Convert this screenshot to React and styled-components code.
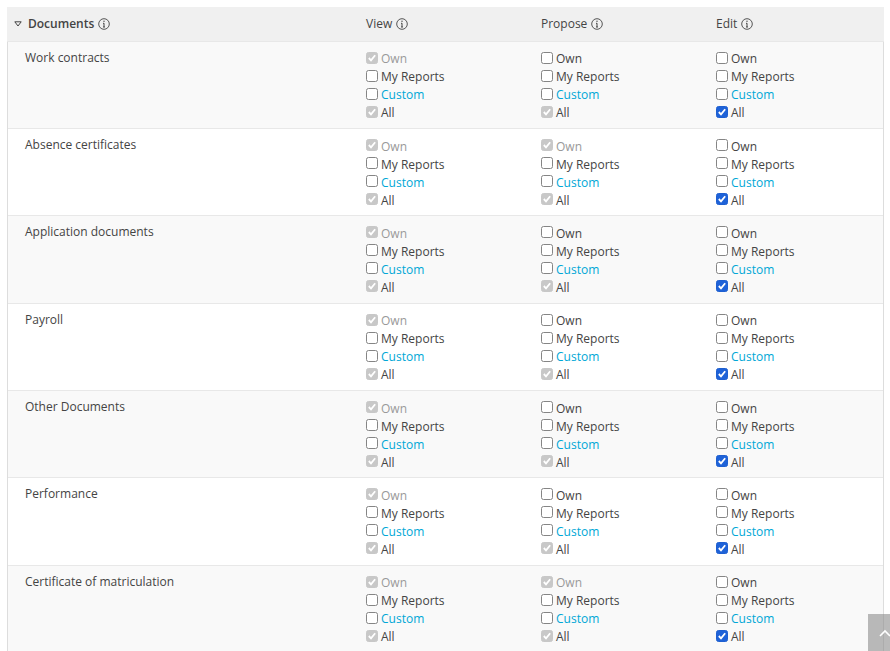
import React from 'react';
import styled, { createGlobalStyle } from 'styled-components';

const Global = createGlobalStyle`
  html, body { margin: 0; padding: 0; background: #fff; height: 651px; overflow: hidden; }
  body { font-family: "Open Sans", "Liberation Sans", sans-serif; font-size: 12px; color: #444; }
`;
const Table = styled.div`
  margin: 7px 6px 0 7px;
  border-left: 1px solid #ddd;
  border-right: 1px solid #ddd;
`;
const Grid = styled.div`
  display: grid;
  grid-template-columns: 358px 175px 175px 1fr;
`;
const Header = styled(Grid)`
  height: 34.7px;
  margin: 0 -1px;
  background: #f0f0f0;
  align-items: center;
  border-bottom: 1px solid #e8e8e8;
  box-sizing: border-box;
`;
const HeadCell = styled.div`
  display: flex;
  align-items: center;
  gap: 4px;
  color: #444;
  font-weight: ${p => (p.$strong ? 600 : 400)};
  padding-left: ${p => (p.$strong ? '7px' : '1px')};
`;
const Row = styled(Grid)`
  height: 87.33px;
  box-sizing: border-box;
  background: ${p => (p.$odd ? '#f9f9f9' : '#fff')};
  border-bottom: 1px solid #e8e8e8;
`;
const Name = styled.div`
  padding: 6px 0 0 17px;
  line-height: 20px;
  color: #444;
`;
const Options = styled.div`
  display: flex;
  flex-direction: column;
  padding: 8.6px 0 0 0;
`;
const Option = styled.label`
  display: flex;
  align-items: center;
  height: 18px;
  gap: 3px;
`;
const Label = styled.span`
  color: ${p => (p.$kind === 'muted' ? '#999' : p.$kind === 'link' ? '#00a7d6' : '#444')};
  line-height: 18px;
`;
const Box = styled.span`
  width: 12px;
  height: 12px;
  box-sizing: border-box;
  border-radius: 2.5px;
  margin-top: -3px;
  display: flex;
  align-items: center;
  justify-content: center;
  border: 1px solid ${p => (p.$state === 'on' ? '#1e5fd0' : p.$state === 'off' ? '#858585' : '#c8c8c8')};
  background: ${p => (p.$state === 'on' ? '#1e62d8' : p.$state === 'off' ? '#fff' : '#c8c8c8')};
`;
const Arrow = styled.svg`
  display: block;
  margin-right: 2px;
`;
const ScrollTop = styled.div`
  position: fixed;
  right: -12px;
  bottom: 0;
  width: 34px;
  height: 37px;
  background: rgba(140, 140, 140, 0.6);
  display: flex;
  align-items: center;
  justify-content: center;
`;

const Info = () => (
  <svg width="12" height="12" viewBox="0 0 12 12" fill="none" stroke="#444">
    <circle cx="6" cy="6" r="5.3" strokeWidth="0.9" />
    <path d="M6 5.2V9M5 9h2M5 5.3h1" strokeWidth="1" />
    <circle cx="6" cy="3.3" r="0.7" fill="#444" stroke="none" />
  </svg>
);

const Check = ({ state }) => (
  <Box $state={state}>
    {state !== 'off' && (
      <svg width="10" height="10" viewBox="0 0 11 11" fill="none" stroke="#fff" strokeWidth="2">
        <path d="M2 5.5l2.4 2.5L9 2.5" />
      </svg>
    )}
  </Box>
);

const Column = ({ own, all }) => (
  <Options>
    <Option>
      <Check state={own} />
      <Label $kind={own === 'dis' ? 'muted' : undefined}>Own</Label>
    </Option>
    <Option>
      <Check state="off" />
      <Label>My Reports</Label>
    </Option>
    <Option>
      <Check state="off" />
      <Label $kind="link">Custom</Label>
    </Option>
    <Option>
      <Check state={all} />
      <Label>All</Label>
    </Option>
  </Options>
);

const rows = [
  ['Work contracts', 'off'],
  ['Absence certificates', 'dis'],
  ['Application documents', 'off'],
  ['Payroll', 'off'],
  ['Other Documents', 'off'],
  ['Performance', 'off'],
  ['Certificate of matriculation', 'dis'],
];

export default function App() {
  return (
    <>
      <Global />
      <Table>
        <Header>
          <HeadCell $strong>
            <Arrow width="8" height="6" viewBox="0 0 8 6" fill="none" stroke="#444">
              <path d="M0.8 0.8h6.4L4 5z" />
            </Arrow>
            Documents <Info />
          </HeadCell>
          <HeadCell>View <Info /></HeadCell>
          <HeadCell>Propose <Info /></HeadCell>
          <HeadCell>Edit <Info /></HeadCell>
        </Header>
        {rows.map(([name, propose], i) => (
          <Row key={name} $odd={i % 2 === 0}>
            <Name>{name}</Name>
            <Column own="dis" all="dis" />
            <Column own={propose} all="dis" />
            <Column own="off" all="on" />
          </Row>
        ))}
      </Table>
      <ScrollTop>
        <svg width="14" height="10" viewBox="0 0 14 10" fill="none" stroke="#fff" strokeWidth="1.6">
          <path d="M2 8l5-5 5 5" />
        </svg>
      </ScrollTop>
    </>
  );
}
